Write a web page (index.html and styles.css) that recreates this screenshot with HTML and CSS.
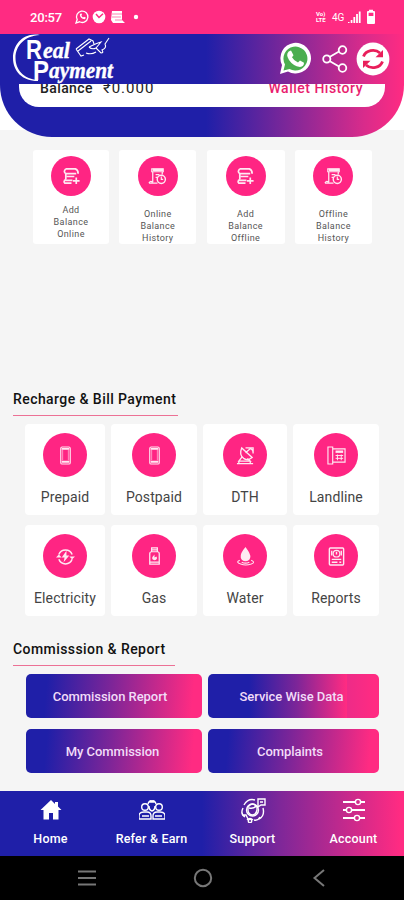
FILE: index.html
```html
<!DOCTYPE html>
<html lang="en">
<head>
<meta charset="utf-8">
<meta name="viewport" content="width=device-width, initial-scale=1">
<title>Real Payment</title>
<link rel="stylesheet" href="styles.css">
</head>
<body>
<svg class="defs" width="0" height="0">
  <symbol id="add" viewBox="0 0 20 20"><path d="M4 2H14Q17 3 17 7M4 2Q1 5 4 7H15M4 7V13M2 14H11M4 13Q1 15 3 17H10M5 10H13M15 11V18M11.5 14.5H18.5" stroke-width="1.8"/></symbol>
  <symbol id="history" viewBox="0 0 20 20"><path d="M4 2H16V5H4ZM5 5V16M15 5V8M8 8H12M8 11H10M1 17H10M1 17Q2 14 5 16" stroke-width="1.3"/><path d="M5 3H16" stroke-width="2.5"/><circle cx="14" cy="13" r="4.3" stroke-width="1.5"/><path d="M14 10V13H16" stroke-width="1.2"/></symbol>
  <symbol id="phone" viewBox="0 0 20 20"><rect x="5" y="1" width="10" height="18" rx="1.5" stroke-width="1.2"/><path d="M6 3H14M6 16.5H14" stroke-width="2"/><path d="M7 4V15M13 4V15" stroke-width=".6"/></symbol>
</svg>
<div class="phone">
  <div class="status">
    <span class="time">20:57</span>
    <svg class="status-left" width="68" height="18" viewBox="0 0 68 18" fill="none" stroke="#fff">
      <path d="M2 15L3.2 11.5A5.7 5.7 0 1 1 5.5 13.8Z" stroke-width="1.3"/><path d="M5.8 6.2Q6 10.6 10.7 11.3L12 9.7L10 8.7L9 9.5Q7.7 8.6 7.4 7.6L8 6.6L7.3 5.3Z" fill="#fff" stroke="none"/>
      <circle cx="25" cy="9" r="6.3" fill="#fff" stroke="none"/><path d="M22 6L25 9.5L29 5.8" stroke="#ff2b82" stroke-width="1.5"/>
      <path d="M38 3H48V12L51 15H39L37 12Z" fill="#fff" stroke="none"/><path d="M37 6H48M38 9H47M41 12H48" stroke="#ff80b3"/>
      <circle cx="62" cy="9" r="2.2" fill="#fff" stroke="none"/>
    </svg>
    <span class="volte">Vo)<br>LTE</span><span class="four-g">4G</span>
    <svg class="status-right" width="28" height="16" viewBox="0 0 28 16" fill="#fff"><path d="M0 13h1.5v1H0zM2.7 11h1.7v3H2.7zM5.4 8h1.8v6H5.4zM8.1 5h1.8v9H8.1zM10.8 2.5h1.8V14h-1.8z"/><path d="M20 2h1V.7h4V2h1q1 0 1 1v11q0 1-1 1h-6q-1 0-1-1V3q0-1 1-1Zm.6 1.7V7h4.8V3.7Z" fill-rule="evenodd"/></svg>
  </div>
  <div class="hero-wrap">
    <div class="hero">
      <header class="topbar">
        <svg class="logo" width="106" height="50" viewBox="0 0 106 50" fill="none" stroke="#fff">
          <path d="M27 1C10-2 0 11 0 24C0 37 9 47 25 47L25 46C10 45 2.5 35 2.5 24C2.5 12 11 2 27 1Z" fill="#fff" stroke="none"/>
          <g class="logo-text"><text x="13" y="25" class="cap" textLength="16" lengthAdjust="spacingAndGlyphs">R</text><text x="30" y="23.5" class="script" textLength="27" lengthAdjust="spacingAndGlyphs">eal</text>
          <text x="20" y="46" class="cap" textLength="16" lengthAdjust="spacingAndGlyphs">P</text><text x="36" y="44" class="script" textLength="64" lengthAdjust="spacingAndGlyphs">ayment</text></g>
          <path d="M63 15L76 5L80 7L81 10M63 15L68 22L71 21M65 17L78 7M76 13Q84 9 88 8L83 14M76 13Q79 16 83 14L88 19Q91 19 89 16Q94 14 92 10L96 4M73 19Q78 21 83 18" stroke-width="1.1"/>
        </svg>
        <svg width="32" height="34" viewBox="0 0 32 34"><path d="M1 32L3 23A15.3 15.3 0 1 1 9 29.4Z" fill="#fff"/><path d="M4.5 28.5L6 22.5A12 12 0 1 1 10.5 27Z" fill="#4bae50"/><path d="M9.7 9.5L12 8.6L14.5 13.2L13 15.3Q15 19 19 20.5L21 18.5L25 20.7Q25 24.5 21 25Q14 24 10 18Q6.5 12.5 9.7 9.5Z" fill="#fff"/></svg>
        <svg class="share" width="26" height="28" viewBox="0 0 26 28" fill="none" stroke="#fff" stroke-width="1.8"><path d="M7.5 12L17 6.5M7.5 16L17 21.5"/><circle cx="4.8" cy="14" r="3.6"/><circle cx="20.5" cy="5" r="3.8"/><circle cx="20.5" cy="23" r="3.8"/></svg>
        <svg class="refresh" width="34" height="34" viewBox="0 0 34 34" fill="none"><circle cx="17" cy="17" r="16.4" fill="#fff"/><path d="M7.5 14.5A9.8 8.5 0 0 1 24 11M26.5 19.5A9.8 8.5 0 0 1 10 23" stroke="#e91e5a" stroke-width="2.8"/><path d="M27 8V15.3H19.5ZM7 26V18.7H14.5Z" fill="#e91e5a"/></svg>
      </header>
      <div class="wallet"><b>Balance</b><span>₹0.000</span><b class="wallet-link">Wallet History</b></div>
    </div>
  </div>
  <main>
    <section class="balance-grid">
      <div class="tile first"><i><svg><use href="#add"/></svg></i><p>Add<br>Balance<br>Online</p></div>
      <div class="tile"><i><svg><use href="#history"/></svg></i><p>Online<br>Balance<br>History</p></div>
      <div class="tile"><i><svg><use href="#add"/></svg></i><p>Add<br>Balance<br>Offline</p></div>
      <div class="tile"><i><svg><use href="#history"/></svg></i><p>Offline<br>Balance<br>History</p></div>
    </section>
    <h2 class="recharge">Recharge &amp; Bill Payment</h2>
    <section class="services">
      <div class="service"><i><svg><use href="#phone"/></svg></i><p>Prepaid</p></div>
      <div class="service"><i><svg><use href="#phone"/></svg></i><p>Postpaid</p></div>
      <div class="service"><i><svg viewBox="0 0 20 20"><path d="M6 2Q3 9 8 13Q12 16 17 12ZM6 2L17 12M10 7L15 3M10 2H18V8M13 2Q18 3 18 7M6 12L3 16H15L12 13M1 18.5H18M3 16V18M15 16V18" stroke-width="1.4"/></svg></i><p>DTH</p></div>
      <div class="service"><i><svg viewBox="0 0 20 20"><path d="M1 1H6V19H1ZM6 3H19V17H6" stroke-width="1.2"/><path d="M9 6H17" stroke-width="2.5"/><path d="M9 10H17M9 13H17M11 9V15M15 9V15" stroke-width="1"/></svg></i><p>Landline</p></div>
      <div class="service"><i><svg viewBox="0 0 20 20"><path d="M3 8A7.5 7.5 0 0 1 17 8M17 13A7.5 7.5 0 0 1 3 13" stroke-width="1.6"/><path d="M11 4L6 11H9L8 16L14 9H11ZM0 11L3 8L6 11ZM14 10H20L17 13Z" fill="#fff" stroke="none"/></svg></i><p>Electricity</p></div>
      <div class="service"><i><svg viewBox="0 0 20 20"><path d="M7 5V1H13V5M7 3H13M5 7Q5 5 7 5H13Q15 5 15 7V18H5ZM5 16H15" stroke-width="1.3"/><path d="M10 8Q5 13 10 14Q14 13 12 10L10 11Z" fill="#fff" stroke="none"/></svg></i><p>Gas</p></div>
      <div class="service"><i><svg viewBox="0 0 20 20"><path d="M10 0Q4 7 5 11Q6 15 10 15Q14 15 15 11Q16 8 10 0Z" fill="#fff" stroke="none"/><path d="M4 14Q-1 16 5 18Q10 20 16 18Q21 16 16 14M6 16Q10 18 14 16" stroke-width="1.1"/></svg></i><p>Water</p></div>
      <div class="service"><i><svg viewBox="0 0 20 20"><rect x="2.5" y="1" width="15" height="18" rx="1" stroke-width="1.5"/><circle cx="10" cy="7" r="3.5" stroke-width="1.2"/><path d="M10 5V8M5 4V9M15 4V9M5 13H15M5 16H11M13 16H15" stroke-width="1.5"/></svg></i><p>Reports</p></div>
    </section>
    <h2 class="commission">Commisssion &amp; Report</h2>
    <section class="actions">
      <button class="wide">Commission Report</button><button class="stepped">Service Wise Data</button>
      <button>My Commission</button><button>Complaints</button>
    </section>
  </main>
  <nav class="tabs">
    <a><svg viewBox="0 0 26 26"><path d="M13 3L2.5 13H5.5V22.5H11V16H15V22.5H20.5V13H23.5L20 9.5V5H17V7Z" fill="#fff" stroke="none"/></svg><span>Home</span></a>
    <a><svg viewBox="0 0 26 26"><circle cx="6" cy="10" r="3.3"/><circle cx="20" cy="10" r="3.3"/><path d="M0 22V19Q0 15 5 15H8Q12 15 12 19V22ZM14 22V19Q14 15 18 15H21Q26 15 26 19V22ZM9 7Q10 3 13 4Q16 3 17 7M10 9Q10 13 13 14Q16 13 16 9M10 5H16M3 19H10M16 19H23"/></svg><span>Refer &amp; Earn</span></a>
    <a><svg viewBox="0 0 26 26"><circle cx="12.5" cy="13" r="6"/><path d="M8 13V10Q12 4 17 10V13Q16 18 12 18Q8 17 8 13ZM9 11Q14 12 16 9M4 8Q8 1 15 3M23 11Q25 19 19 22M3 11Q0 17 5 20M2 18H6L8 22M7 23Q10 20 13 23M18 2H25V8H21L18 10ZM20 5H23M14 23Q18 24 20 20"/><circle cx="10" cy="24" r="1.7"/></svg><span>Support</span></a>
    <a><svg viewBox="0 0 26 26"><path d="M2 5H14M20 5H24M2 13H5M11 13H24M2 21H13M19 21H24" stroke-width="1.9"/><circle cx="17" cy="5" r="2.6"/><circle cx="8" cy="13" r="2.6"/><circle cx="16" cy="21" r="2.6"/></svg><span>Account</span></a>
  </nav>
  <div class="system">
    <svg viewBox="0 0 20 20"><path d="M1 3.5H19M1 10H19M1 16.5H19"/></svg>
    <svg viewBox="0 0 20 20"><circle cx="10" cy="10" r="8.2"/></svg>
    <svg viewBox="0 0 20 20"><path d="M15 2L5.5 10L15 18"/></svg>
  </div>
</div>
</body>
</html>
```
FILE: styles.css
```css
* { box-sizing: border-box; }
body { margin: 0; font-family: Roboto, sans-serif; background: #f5f5f5; }
p, h2 { margin: 0; }
.defs { display: block; height: 0; }
.phone { width: 404px; height: 900px; overflow: hidden; display: flex; flex-direction: column; }
.status { height: 34px; background: #ff2b82; color: #fff; display: flex; align-items: center; padding-left: 30px; }
.time { font-size: 13px; font-weight: 500; letter-spacing: -.2px; width: 44px; padding-top: 1px; }
.status-left { margin-right: 174px; }
.volte { font-size: 6px; line-height: 6px; font-weight: 700; width: 16px; }
.four-g { font-size: 10px; width: 15px; }
.status-right { margin-left: 1px; }
.hero-wrap { height: 103px; background: linear-gradient(#fff 96px, #f5f5f5 96px); }
.hero { height: 103px; border-radius: 0 0 52px 52px; background: linear-gradient(90deg, #1f1fa8 51%, #7d2799 71%, #d82b8b 90%, #ff2b82 100%); }
.topbar { height: 50px; display: flex; align-items: center; padding-left: 13px; }
.logo { margin-right: 160px; overflow: visible; }
.logo-text { fill: #fff; stroke: none; }
.cap { font: 700 28px "Liberation Sans", sans-serif; }
.script { font: italic 700 24px "Liberation Serif", serif; stroke: #fff; stroke-width: .4px; }
.share { margin-left: 11px; }
.refresh { margin-left: 8px; }
.wallet { height: 23px; margin: 0 19px; border-radius: 0 0 20px 20px; background: #fff; overflow: hidden; display: flex; padding: 0 22px 0 21px; font-size: 14px; line-height: 8px; color: #222; }
.wallet b { font-weight: 500; letter-spacing: .4px; }
.wallet span { margin-left: 10px; font-size: 15px; letter-spacing: 1px; }
.wallet .wallet-link { margin-left: auto; color: #e91e6f; letter-spacing: .5px; }
main { height: 654px; flex: none; }
i { display: grid; place-items: center; border-radius: 50%; background: #ff2583; flex: none; }
i svg { fill: none; stroke: #fff; opacity: .9; }
.balance-grid { display: grid; grid-template-columns: 76px 77px 78px 77px; column-gap: 10.3px; padding: 13px 0 0 33px; }
.tile { height: 94px; border-radius: 3px; background: #fff; display: flex; flex-direction: column; align-items: center; padding-top: 6px; overflow: hidden; }
.tile i { width: 40px; height: 40px; }
.tile i svg { width: 19px; height: 19px; }
.tile p { margin-top: 12px; font-size: 9px; line-height: 12px; text-align: center; color: #555; letter-spacing: .4px; }
.tile.first p { margin-top: 8px; }
h2 { font-size: 14px; line-height: 17px; font-weight: 500; color: #111; border-bottom: 1px solid #ec7195; margin-left: 13px; height: 26px; padding-top: 1px; white-space: nowrap; }
.recharge { width: 165px; margin-top: 146px; letter-spacing: .43px; }
.services { display: grid; grid-template-columns: 80px 86px 84px 86px; column-gap: 6px; row-gap: 10px; margin: 8px 0 0 25px; }
.service { height: 91px; border-radius: 4px; background: #fff; display: flex; flex-direction: column; align-items: center; padding-top: 9px; }
.service i { width: 44px; height: 44px; }
.service i svg { width: 19px; height: 19px; }
.service p { margin-top: 10px; font-size: 14px; line-height: 20px; color: #444; letter-spacing: .1px; }
.commission { width: 162px; margin-top: 24px; letter-spacing: .43px; }
.actions { display: grid; grid-template-columns: 176px 171px; gap: 11px 6px; margin: 8px 0 0 26px; }
button { height: 44px; border: 0; border-radius: 5px; padding: 0 3px 0 0; font: 500 13px Roboto, sans-serif; letter-spacing: -.05px; color: #f2dcf8; background: linear-gradient(95deg, #1f1fa8 12%, #7d2598 48%, #ff2b82 94%); white-space: nowrap; }
.actions .wide { padding-right: 8px; }
.actions .stepped { padding-right: 4px; background: linear-gradient(90deg, #1f1fa8 24%, #7d2598 52%, #ff2b82 81%, #ed2b88 81%, #ff2b82 97%); }
button:last-child { padding-right: 7px; }
.tabs { height: 65px; flex: none; display: grid; grid-template-columns: repeat(4, 101px); background: linear-gradient(90deg, #1f1fa8 50%, #7d2799 69%, #ff2b82 99%); }
.tabs a { display: flex; flex-direction: column; align-items: center; padding-top: 6px; color: #fff; font-size: 12.5px; font-weight: 500; letter-spacing: .2px; }
.tabs svg { width: 26px; height: 26px; fill: none; stroke: #fff; stroke-width: 1.4; }
.tabs span { margin-top: 8px; line-height: 16px; }
.system { height: 44px; flex: none; background: #000; display: flex; padding-left: 77px; gap: 96px; align-items: center; }
.system svg { width: 20px; height: 20px; fill: none; stroke: #777; stroke-width: 2; }
```
